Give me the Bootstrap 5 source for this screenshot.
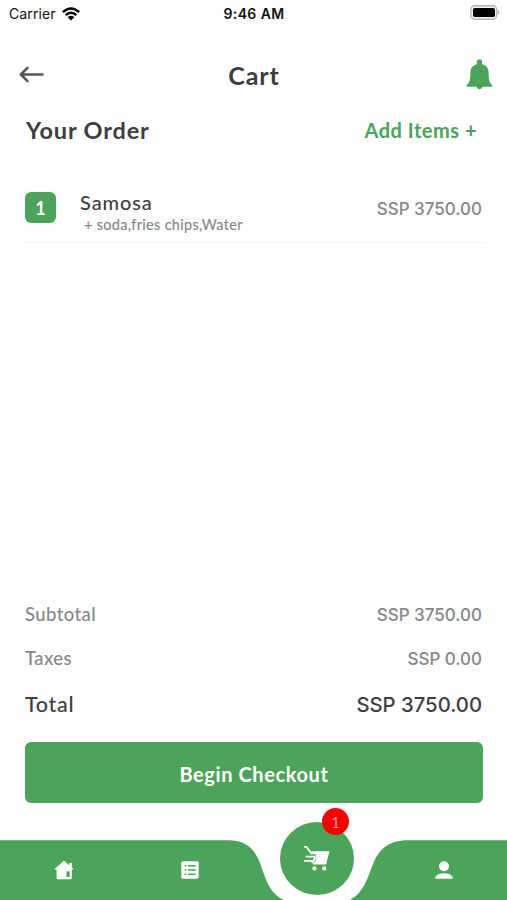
<!DOCTYPE html>
<html lang="en">
<head>
<meta charset="utf-8">
<meta name="viewport" content="width=device-width, initial-scale=1">
<title>Cart</title>
<link href="https://cdn.jsdelivr.net/npm/bootstrap@5.3.0/dist/css/bootstrap.min.css" rel="stylesheet">
<style>
:root { --leaf: #4ba45a; --ink: #3e3e40; --soft: #85878a; }
body { font-family: Lato, "Open Sans", sans-serif; color: var(--ink); background: #fefefe; }
.screen { height: 900px; overflow: hidden; }
.screen span, .screen a, .screen h1, .screen h2 { line-height: 1; white-space: nowrap; }
.status-bar { height: 28px; padding: 0 7px 0 9px; font-family: Inter, sans-serif; color: #111; }
.status-bar > * { flex: 1 1 0; }
.status-bar .signal { gap: 6px; }
.carrier { font-size: 14px; letter-spacing: .1px; }
.clock { font-size: 14px; font-weight: 600; letter-spacing: .4px; padding-right: 1px; }
.title-bar { height: 74px; padding: 20px 14px 0 19px; }
.title-bar > * { flex: 1 1 0; }
.title-bar h1 { font-size: 25px; font-weight: 700; letter-spacing: .9px; padding-right: 4px; }
.order-head { height: 56px; padding: 0 30px 0 26px; }
.order-head h2 { font-size: 23.5px; font-weight: 700; letter-spacing: .85px; padding-top: 2px; }
.add-link { font-size: 20px; font-weight: 700; letter-spacing: .5px; color: var(--leaf); }
.order-line { height: 72px; margin: 13px 23px 0 25px; padding: 12px 2px 0 0; border-bottom: 1px solid #f1f2f2; }
.qty { width: 31px; height: 31px; margin: 9px 24px 0 0; border-radius: 6px; background: var(--leaf); font-size: 18px; }
.dish { font-size: 20px; letter-spacing: .9px; font-weight: 500; padding-top: 1px; }
.extras { font-size: 14.5px; letter-spacing: .3px; color: var(--soft); padding-top: 6px; -webkit-text-stroke: .15px; }
.price { font-family: Inter, sans-serif; font-weight: 500; font-size: 17px; color: var(--soft); }
.order-line .price { padding-top: 18px; }
.sums { padding: 0 25px; }
.sums > div { height: 44px; }
.sums .price { padding-top: 2px; }
.sum-label { font-size: 18.5px; letter-spacing: .4px; font-weight: 500; color: var(--soft); }
.grand .sum-label { font-size: 21.5px; letter-spacing: .7px; padding-top: 2px; color: var(--ink); }
.grand .price { font-size: 20.3px; color: var(--ink); }
.checkout { height: 61px; margin: 18px 24px 37px 25px; border-radius: 6px; --bs-btn-bg: var(--leaf); --bs-btn-color: #fff; --bs-btn-padding-y: 8px; padding-top: 10px; font-size: 20px; letter-spacing: .6px; }
.tabs { height: 60px; }
.tabs .wave { position: absolute; left: 0; top: 0; }
.tabs .tab { width: 126.6px; position: relative; }
.tabs .home-tab { padding-left: 2px; }
.cart-tab { position: absolute; left: 280px; top: -18px; width: 74px; height: 73px; background: var(--leaf); }
.cart-tab svg { margin: 0 2px 1px 0; }
.count { position: absolute; left: 42px; top: -14px; width: 27px; height: 27px; padding-top: 2px; background: #f80000; font-size: 15px; font-weight: 300; }
</style>
<script src="https://cdn.jsdelivr.net/npm/bootstrap@5.3.0/dist/js/bootstrap.bundle.min.js"></script>
</head>
<body>
<main class="screen d-flex flex-column">
  <div class="status-bar d-flex align-items-center">
    <div class="signal d-flex align-items-center">
      <span class="carrier">Carrier</span>
      <svg width="18" height="14" viewBox="0 0 18 14" fill="none" stroke="#050505" stroke-width="2.4"><path d="M.9 5.2Q9-2.400 17.100 5.200M3.700 8.200Q9 3.200 14.300 8.200"/><path d="M5.700 10.200Q9 7.300 12.300 10.200L9 13.600Z" fill="#050505" stroke="none"/></svg>
    </div>
    <span class="clock text-center">9:46 AM</span>
    <div class="d-flex justify-content-end pb-1">
      <svg width="30" height="15" viewBox="0 0 30 15"><rect x=".8" y=".8" width="26" height="13.400" rx="4" fill="#f0f0f0" stroke="#b5b5b5" stroke-width="1.400"/><rect x="3" y="3" width="22" height="9" rx="1.800" fill="#000"/><path d="M28.200 5Q30.500 7.500 28.200 10Z" fill="#aaa"/></svg>
    </div>
  </div>
  <header class="title-bar d-flex align-items-center">
    <a href="#" class="d-flex" aria-label="Back"><svg width="26" height="18" viewBox="0 0 26 18" fill="none" stroke="#555" stroke-width="2.500" stroke-linecap="round" stroke-linejoin="round"><path d="M23.500 8.500H2M8.500 1.800L1.800 8.500L8.500 15.200"/></svg></a>
    <h1 class="text-center m-0">Cart</h1>
    <a href="#" class="d-flex justify-content-end" aria-label="Notifications"><svg width="27" height="32" viewBox="0 0 27 32" fill="#4ba45a"><path d="M10.800 3a2.700 2.700 0 0 1 5.400 0V5.200C20.500 6.400 22.600 9.500 22.600 13.500C22.600 20.500 23.400 24 26.300 26.200V27.700H16.700a3.300 3.300 0 0 1-6.400 0H.7V26.200C3.600 24 4.400 20.500 4.400 13.500C4.400 9.500 6.500 6.400 10.800 5.200Z"/></svg></a>
  </header>
  <section class="order-head d-flex align-items-center justify-content-between">
    <h2 class="m-0">Your Order</h2>
    <a href="#" class="add-link text-decoration-none">Add Items +</a>
  </section>
  <section class="order-line d-flex align-items-start">
    <span class="qty d-flex align-items-center justify-content-center text-white fw-bold">1</span>
    <div class="d-flex flex-column flex-grow-1 pt-2">
      <span class="dish">Samosa</span>
      <span class="extras ps-1">+ soda,fries chips,Water</span>
    </div>
    <span class="price">SSP 3750.00</span>
  </section>
  <section class="sums mt-auto">
    <div class="d-flex align-items-center justify-content-between"><span class="sum-label">Subtotal</span><span class="price">SSP 3750.00</span></div>
    <div class="d-flex align-items-center justify-content-between"><span class="sum-label">Taxes</span><span class="price">SSP 0.00</span></div>
    <div class="grand d-flex align-items-center justify-content-between pt-1"><span class="sum-label">Total</span><span class="price">SSP 3750.00</span></div>
  </section>
  <button type="button" class="checkout btn fw-bold flex-shrink-0">Begin Checkout</button>
  <nav class="tabs position-relative d-flex flex-shrink-0">
    <svg class="wave" width="507" height="60" viewBox="0 0 507 60" fill="#4ba45a"><path d="M0 .3H228C246 .3 254 8 260 23C266 40 270 54 284 60H0ZM507 .3H408C389 .3 379 9 373 24C367 40 363 53 350 60H507Z"/></svg>
    <a href="#" class="tab home-tab d-flex align-items-center justify-content-center" aria-label="Home"><svg width="20" height="20" viewBox="0 0 20 20" fill="#fff"><path d="M10 .8L.8 8.700V9.500H2.600V18.300Q2.600 19.200 3.500 19.200H16.800Q17.800 19.200 17.800 18.300V9.500H19.200V8.700L17.800 7.300V3H15.300V5.300Z"/><path d="M12.500 11.300H15.700V17H12.500Z" fill="#4ba45a"/></svg></a>
    <a href="#" class="tab d-flex align-items-center justify-content-center" aria-label="Orders"><svg width="20" height="20" viewBox="0 0 20 20"><rect x="1.300" y="1.300" width="17.400" height="17.400" rx="1.800" fill="#fff"/><path d="M4.500 5.700H6.300M8 5.700H15.700M4.500 10H6.300M8 10H15.700M4.500 14.300H6.300M8 14.300H15.700" stroke="#4ba45a" stroke-width="1.600"/></svg></a>
    <a href="#" class="tab ms-auto d-flex align-items-center justify-content-center" aria-label="Profile"><svg width="20" height="20" viewBox="0 0 20 20" fill="#fff"><circle cx="10" cy="6.200" r="5"/><path d="M1.500 18.800V16.800C4 12.200 16 12.200 18.500 16.800V18.800Z"/></svg></a>
    <a href="#" class="cart-tab rounded-circle d-flex align-items-center justify-content-center text-decoration-none" aria-label="Cart">
      <svg width="29" height="27" viewBox="0 0 28 26" fill="none" stroke="#fff" stroke-width="1.700"><path d="M2 1.800H4.300L8 6.700"/><path d="M7 6H26.500L23.300 18.800H10.500L13.800 13.500L13 9H8.300Z" fill="#fff" stroke="none"/><path d="M3.500 11.200H11.500Q13.500 11.500 12 13.500L9.800 17.600M2 15.200H10.500"/><circle cx="12" cy="22.600" r="2" fill="#fff" stroke="none"/><circle cx="21.500" cy="22.600" r="2" fill="#fff" stroke="none"/></svg>
      <span class="count rounded-circle d-flex align-items-center justify-content-center text-white">1</span>
    </a>
  </nav>
</main>
</body>
</html>
